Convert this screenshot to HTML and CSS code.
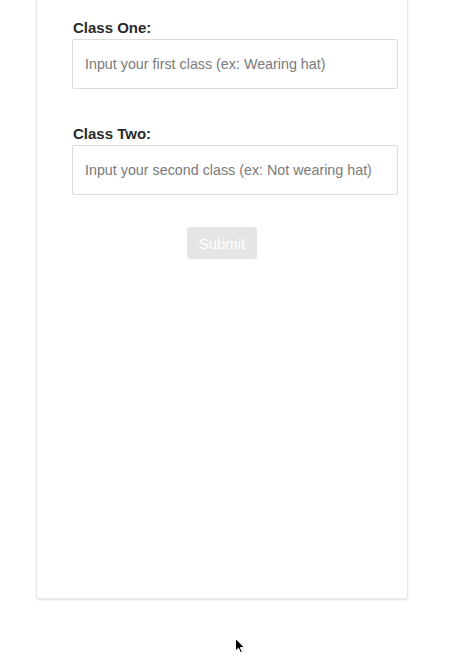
FILE: index.html
```html
<!DOCTYPE html>
<html>
<head>
<meta charset="utf-8">
<link rel="stylesheet" href="styles.css">
</head>
<body>
<div class="page">
  <div class="card">
    <form class="form">
      <div class="field">
        <label class="label">Class One:</label>
        <input class="input" type="text" placeholder="Input your first class (ex: Wearing hat)">
      </div>
      <div class="field">
        <label class="label">Class Two:</label>
        <input class="input" type="text" placeholder="Input your second class (ex: Not wearing hat)">
      </div>
      <div class="actions">
        <button class="submit" type="button" disabled>Submit</button>
      </div>
    </form>
  </div>
  <svg class="cursor" width="12" height="18" viewBox="0 0 12 18">
    <path d="M0.5 0.5 L0.5 13 L3.5 10.2 L5.6 15 L7.4 14.2 L5.4 9.6 L9.5 9.6 Z" fill="#000" stroke="#fff" stroke-width="1"/>
  </svg>
</div>
</body>
</html>
```
FILE: styles.css
```css
html, body {
  margin: 0;
  padding: 0;
  background: #fff;
}
.page {
  position: relative;
  width: 450px;
  height: 668px;
  overflow: hidden;
  font-family: "Liberation Sans", Arial, sans-serif;
}
.card {
  margin-top: -10px;
  margin-left: 36px;
  width: 372px;
  height: 609px;
  border: 1px solid #e8e8e8;
  border-radius: 3px;
  box-shadow: 0 1px 2px rgba(0,0,0,0.12);
  box-sizing: border-box;
  background: #fff;
}
.form {
  padding: 26px 9px 0 35px;
  display: flex;
  flex-direction: column;
}
.field {
  display: flex;
  flex-direction: column;
  margin-bottom: 34px;
}
.field:nth-child(2) {
  margin-bottom: 32px;
}
.label {
  font-size: 15px;
  font-weight: bold;
  color: #2a2a2a;
  line-height: 18px;
  padding-top: 2px;
  margin-bottom: 2px;
  padding-left: 1px;
}
.input {
  height: 50px;
  box-sizing: border-box;
  border: 1px solid #dcdcdc;
  border-radius: 2px;
  padding: 0 12px;
  font-family: "Liberation Sans", Arial, sans-serif;
  font-size: 14.3px;
  color: #333;
  outline: none;
}
.input::placeholder {
  color: #7a7a7a;
}
.actions {
  display: flex;
  justify-content: center;
  margin-left: -35px;
  margin-right: -9px;
}
.submit {
  width: 70px;
  height: 32px;
  border: none;
  border-radius: 3px;
  background: #e5e5e5;
  color: #fff;
  font-family: "Liberation Sans", Arial, sans-serif;
  font-size: 15px;
}
.cursor {
  position: absolute;
  left: 235px;
  top: 638px;
}
```
